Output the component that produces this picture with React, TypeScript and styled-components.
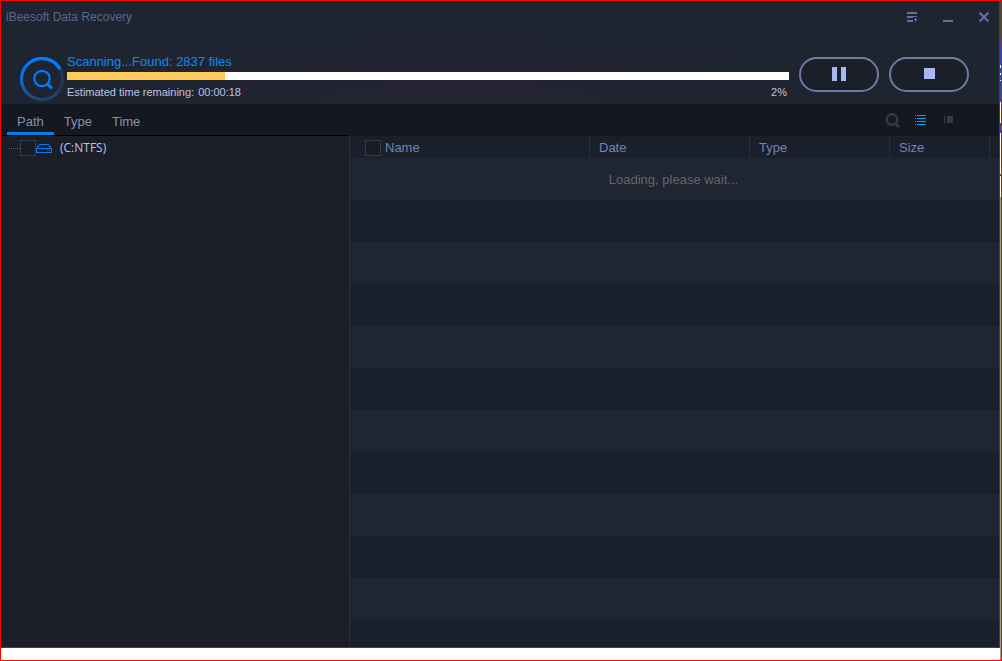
import React from 'react';
import styled, { createGlobalStyle } from 'styled-components';

const GlobalStyle = createGlobalStyle`
  * { box-sizing: border-box; }
  body {
    margin: 0;
    background: #ffffff;
    font-family: "Liberation Sans", Arial, sans-serif;
    font-size: 13px;
    line-height: 16px;
  }
  button {
    padding: 0;
    border: 0;
    background: none;
    font: inherit;
    color: inherit;
    cursor: pointer;
  }
  svg { display: block; }
`;

const Desktop = styled.div`
  display: flex;
  min-height: 100vh;
  padding-bottom: 12px;
  border: 1px solid #ff0000;
`;

const AppWindow = styled.main`
  flex: 1;
  min-width: 0;
  display: flex;
  flex-direction: column;
  background: #1b1e27;
  border-right: 1px solid #3a4056;
  border-bottom: 1px solid #3c4163;
`;

const BehindWindow = styled.div`
  width: 1px;
  margin-bottom: -12px;
  background: linear-gradient(
    #3a4a48 0 40px, #2450a8 40px 64px, #ffffff 64px 67px, #2450a8 67px 72px,
    #ffffff 72px 74px, #2450a8 74px 79px, #ffffff 79px 80px, #2450a8 80px 101px,
    #ffffff 101px 122px, #2450a8 122px 132px, #ffffff 132px 173px,
    #555555 173px 175px, #ffffff 175px 196px, #9a9a9a 196px
  );
`;

const Header = styled.header`
  background:
    radial-gradient(ellipse 400px 66px at 46% 100%, #262334 0, rgba(38, 35, 52, 0.5) 40%, rgba(31, 36, 49, 0) 100%),
    #1f2431;
`;

const TitleBar = styled.div`
  display: flex;
  align-items: center;
  justify-content: space-between;
  height: 32px;
  padding: 0 7px 0 5px;
`;

const Title = styled.h1`
  margin: 0;
  font-size: 12px;
  font-weight: normal;
  color: #5a6690;
`;

const WindowControls = styled.div`
  display: flex;
  gap: 20px;
  color: #626fa0;
`;

const ScanPanel = styled.section`
  display: flex;
  align-items: flex-start;
  height: 71px;
  padding: 21px 30px 0 18px;
`;

const ScanInfo = styled.div`
  flex: 1;
  min-width: 0;
  margin-right: 10px;
`;

const ScanStatus = styled.p`
  margin: 0 0 2px;
  color: #0c8cf0;
`;

const ProgressTrack = styled.div`
  height: 8px;
  background: #ffffff;
`;

const ProgressFill = styled.div`
  height: 100%;
  background: #ffc95c;
`;

const ScanDetails = styled.div`
  display: flex;
  margin-top: 4px;
  padding-right: 2px;
  font-size: 11px;
  color: #bcc4e4;
`;

const TimeLeft = styled.span`
  margin-left: 4px;
`;

const Percent = styled.span`
  margin-left: auto;
`;

const ScanActions = styled.div`
  display: flex;
  gap: 10px;
  padding-top: 3px;
`;

const PillButton = styled.button`
  display: grid;
  place-items: center;
  width: 80px;
  height: 35px;
  padding-bottom: 2px;
  border: 2px solid #6f7aa5;
  border-radius: 18px;
  background: #1b1f2a;
  color: #a9b8f5;
`;

const Toolbar = styled.div`
  display: flex;
  justify-content: space-between;
  height: 32px;
  padding-right: 41px;
  background: #141820;
`;

const Tabs = styled.nav`
  display: flex;
  width: 348px;
  padding-left: 6px;
  border-bottom: 1px solid #000000;
`;

const Tab = styled.button<{ $active?: boolean }>`
  height: 31px;
  padding: 8px 10px 0;
  border-bottom: 3px solid ${({ $active }) => ($active ? '#0080e8' : 'transparent')};
  color: #8791b4;
`;

const ViewTools = styled.div`
  display: flex;
  align-items: center;
  gap: 13px;
`;

const ToolButton = styled.button<{ $active?: boolean }>`
  color: ${({ $active }) => ($active ? '#00a2ff' : '#343942')};
`;

const Content = styled.div`
  flex: 1;
  display: flex;
`;

const TreePanel = styled.aside`
  width: 349px;
  border-right: 1px solid #2a2e38;
`;

const TreeItem = styled.label`
  display: flex;
  align-items: center;
  height: 24px;
  padding-left: 8px;
  font-family: "Open Sans", "Noto Sans", sans-serif;
  font-size: 12px;
  color: #b4c2ee;
`;

const TreeLine = styled.span`
  width: 11px;
  border-top: 1px dotted #5b6070;
`;

const CheckBox = styled.input`
  appearance: none;
  flex: none;
  width: 16px;
  height: 16px;
  margin: 0;
  border: 1px solid #363b46;
  background: #171b23;
`;

const DriveName = styled.span`
  margin-left: 8px;
`;

const FilePanel = styled.section`
  flex: 1;
  min-width: 0;
  background: #1f2532;
`;

const FileArea = styled.div`
  height: 100%;
  background: repeating-linear-gradient(#1f2532 0 42px, #1a202b 42px 84px) 0 22px;
`;

const FileTable = styled.table`
  width: 100%;
  table-layout: fixed;
  border-collapse: separate;
  border-spacing: 0;
`;

const HeadCell = styled.th<{ $width?: number }>`
  width: ${({ $width }) => ($width ? `${$width}px` : 'auto')};
  height: 22px;
  padding: 2px 0 0 9px;
  border-right: 1px solid #2a2e38;
  background: #1a202b;
  color: #7583b0;
  font-weight: normal;
  text-align: left;

  &:first-child { padding-left: 15px; }
  &:last-child { padding: 0; border: 0; }
`;

const NameHead = styled.label`
  display: flex;
  align-items: center;
  gap: 4px;
`;

const LoadingCell = styled.td`
  height: 42px;
  padding: 2px 2px 0 0;
  color: #666666;
  text-align: center;
`;

const ScanIcon = () => (
  <svg width="48" height="48" viewBox="0 0 48 48" fill="none">
    <defs>
      <linearGradient id="ring" x1="0.2" y1="0" x2="0.6" y2="1">
        <stop offset="0" stopColor="#007cff" />
        <stop offset="0.3" stopColor="#0874e8" />
        <stop offset="0.7" stopColor="#155596" />
        <stop offset="1" stopColor="#1f4470" />
      </linearGradient>
    </defs>
    <circle cx="23" cy="25" r="20.500" stroke="#26364c" strokeWidth="3" />
    <path d="M38 39A20.500 20.500 0 1 1 41 15" stroke="url(#ring)" strokeWidth="3" />
    <path d="M9 10A20.500 20.500 0 0 1 41 15" stroke="#007cff" strokeWidth="3" />
    <circle cx="23" cy="24.500" r="7.700" stroke="#007cff" strokeWidth="2.200" />
    <path d="M28.500 30L33 34.500" stroke="#007cff" strokeWidth="3" />
  </svg>
);

const MenuIcon = () => (
  <svg width="16" height="16" fill="currentColor" shapeRendering="crispEdges">
    <path d="M3 3h10v2H3zM3 7h10v1H3zM3 8h6v1H3zM3 11h6v2H3zM11 9h1v4h-1zM10 10h3v1h-3z" />
  </svg>
);

const MinimizeIcon = () => (
  <svg width="16" height="16" fill="currentColor">
    <path d="M3 11h10v2H3z" />
  </svg>
);

const CloseIcon = () => (
  <svg width="16" height="16" stroke="currentColor" strokeWidth="2.200">
    <path d="M3.500 3.500l9 9M12.500 3.500l-9 9" />
  </svg>
);

const PauseIcon = () => (
  <svg width="14" height="14" fill="currentColor">
    <path d="M0 0h5v14H0zM9 0h5v14H9z" />
  </svg>
);

const StopIcon = () => (
  <svg width="11" height="11" fill="currentColor">
    <path d="M0 0h11v11H0z" />
  </svg>
);

const SearchIcon = () => (
  <svg width="16" height="16" fill="none" stroke="currentColor">
    <circle cx="8" cy="7.500" r="5.300" strokeWidth="2.400" />
    <path d="M11.500 11.500l3.500 3.500" strokeWidth="2.500" />
  </svg>
);

const ListIcon = () => (
  <svg width="16" height="16" fill="currentColor" shapeRendering="crispEdges">
    <path d="M2 3h1v1H2zM4 3h9v1H4zM2 6h1v1H2zM4 6h9v1H4zM2 9h1v1H2zM4 9h9v1H4zM2 12h1v1H2zM4 12h9v1H4z" />
  </svg>
);

const PreviewIcon = () => (
  <svg width="16" height="16" fill="currentColor" shapeRendering="crispEdges">
    <path d="M2 3h1v9H2zM5 4h6v7H5z" />
  </svg>
);

const DriveIcon = () => (
  <svg width="16" height="16" fill="none" stroke="#0878ee" shapeRendering="crispEdges">
    <path d="M0.500 8.500h15v4h-15zM0.500 8.500l3-4h9l3 4M11 10.500h1M13 10.500h1" />
  </svg>
);

const COLUMNS = [
  { label: 'Date', width: 160 },
  { label: 'Type', width: 140 },
  { label: 'Size', width: 100 },
];

const SCAN_FILL = 158 / 722;

export default function App() {
  return (
    <>
      <GlobalStyle />
      <Desktop>
        <AppWindow>
          <Header>
            <TitleBar>
              <Title>iBeesoft Data Recovery</Title>
              <WindowControls>
                <button aria-label="Menu"><MenuIcon /></button>
                <button aria-label="Minimize"><MinimizeIcon /></button>
                <button aria-label="Close"><CloseIcon /></button>
              </WindowControls>
            </TitleBar>
            <ScanPanel>
              <ScanIcon />
              <ScanInfo>
                <ScanStatus>Scanning...Found: 2837 files</ScanStatus>
                <ProgressTrack role="progressbar" aria-label="Scan progress" aria-valuenow={2}>
                  <ProgressFill style={{ width: `${SCAN_FILL * 100}%` }} />
                </ProgressTrack>
                <ScanDetails>
                  <span>Estimated time remaining:</span>
                  <TimeLeft>00:00:18</TimeLeft>
                  <Percent>2%</Percent>
                </ScanDetails>
              </ScanInfo>
              <ScanActions>
                <PillButton aria-label="Pause"><PauseIcon /></PillButton>
                <PillButton aria-label="Stop"><StopIcon /></PillButton>
              </ScanActions>
            </ScanPanel>
          </Header>
          <Toolbar>
            <Tabs>
              <Tab $active>Path</Tab>
              <Tab>Type</Tab>
              <Tab>Time</Tab>
            </Tabs>
            <ViewTools>
              <ToolButton aria-label="Search"><SearchIcon /></ToolButton>
              <ToolButton $active aria-label="List view"><ListIcon /></ToolButton>
              <ToolButton aria-label="Preview view"><PreviewIcon /></ToolButton>
            </ViewTools>
          </Toolbar>
          <Content>
            <TreePanel>
              <TreeItem>
                <TreeLine />
                <CheckBox type="checkbox" />
                <DriveIcon />
                <DriveName>(C:NTFS)</DriveName>
              </TreeItem>
            </TreePanel>
            <FilePanel>
              <FileArea>
                <FileTable>
                  <thead>
                    <tr>
                      <HeadCell>
                        <NameHead>
                          <CheckBox type="checkbox" />
                          Name
                        </NameHead>
                      </HeadCell>
                      {COLUMNS.map(({ label, width }) => (
                        <HeadCell key={label} $width={width}>{label}</HeadCell>
                      ))}
                      <HeadCell $width={9} />
                    </tr>
                  </thead>
                  <tbody>
                    <tr>
                      <LoadingCell colSpan={5}>Loading, please wait...</LoadingCell>
                    </tr>
                  </tbody>
                </FileTable>
              </FileArea>
            </FilePanel>
          </Content>
        </AppWindow>
        <BehindWindow />
      </Desktop>
    </>
  );
}
